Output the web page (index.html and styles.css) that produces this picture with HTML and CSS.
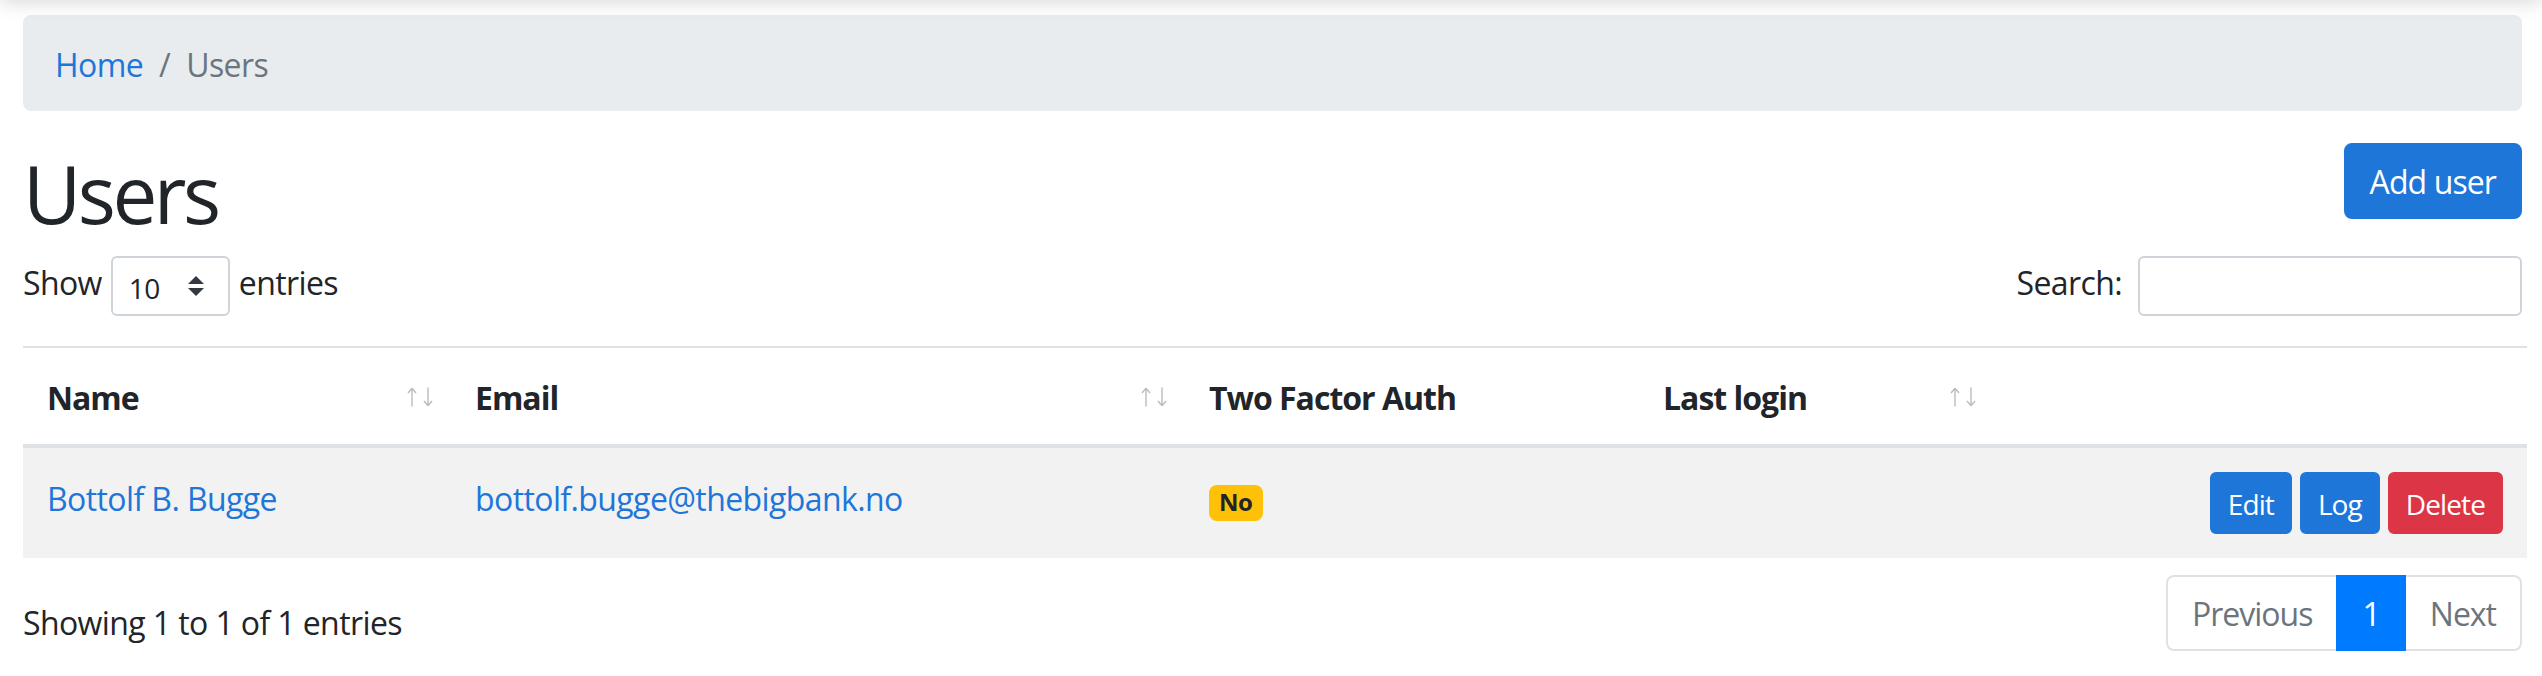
FILE: index.html
```html
<!DOCTYPE html>
<html lang="en">
<head>
<meta charset="utf-8">
<title>Users</title>
<link rel="stylesheet" href="styles.css">
</head>
<body>
<div class="topbar-shadow"></div>
<main class="page">
  <nav class="crumbs">
    <a href="#" class="crumb-link">Home</a>
    <span class="crumb-sep">/</span>
    <span class="crumb-current">Users</span>
  </nav>

  <div class="titlebar">
    <h1 class="title">Users</h1>
    <button class="btn btn-blue btn-lg" type="button">Add user</button>
  </div>

  <div class="dt-top">
    <label class="dt-length">
      <span class="dt-text">Show</span>
      <span class="dt-select">
        <span class="dt-select-val">10</span>
        <svg class="dt-select-arrow" width="16" height="20" viewBox="0 0 4 5"><path fill="#343a40" d="M2 0L0 2h4zm0 5L0 3h4z"/></svg>
      </span>
      <span class="dt-text">entries</span>
    </label>
    <label class="dt-filter">
      <span class="dt-text">Search:</span>
      <span class="dt-input"></span>
    </label>
  </div>

  <table class="users">
    <colgroup>
      <col class="c-name">
      <col class="c-email">
      <col class="c-tfa">
      <col class="c-login">
      <col class="c-actions">
    </colgroup>
    <thead>
      <tr>
        <th class="sortable">Name
          <span class="sort-icons">
            <svg class="arr" width="10" height="20" viewBox="0 0 10 20"><path d="M5 19.5V1.5M5 1.2L1 6M5 1.2L9 6" fill="none" stroke="#212529" stroke-width="1.4"/></svg>
            <svg class="arr" width="10" height="20" viewBox="0 0 10 20"><path d="M5 0.5V18.5M5 18.8L1 14M5 18.8L9 14" fill="none" stroke="#212529" stroke-width="1.4"/></svg>
          </span>
        </th>
        <th class="sortable">Email
          <span class="sort-icons">
            <svg class="arr" width="10" height="20" viewBox="0 0 10 20"><path d="M5 19.5V1.5M5 1.2L1 6M5 1.2L9 6" fill="none" stroke="#212529" stroke-width="1.4"/></svg>
            <svg class="arr" width="10" height="20" viewBox="0 0 10 20"><path d="M5 0.5V18.5M5 18.8L1 14M5 18.8L9 14" fill="none" stroke="#212529" stroke-width="1.4"/></svg>
          </span>
        </th>
        <th>Two Factor Auth</th>
        <th class="sortable">Last login
          <span class="sort-icons">
            <svg class="arr" width="10" height="20" viewBox="0 0 10 20"><path d="M5 19.5V1.5M5 1.2L1 6M5 1.2L9 6" fill="none" stroke="#212529" stroke-width="1.4"/></svg>
            <svg class="arr" width="10" height="20" viewBox="0 0 10 20"><path d="M5 0.5V18.5M5 18.8L1 14M5 18.8L9 14" fill="none" stroke="#212529" stroke-width="1.4"/></svg>
          </span>
        </th>
        <th></th>
      </tr>
    </thead>
    <tbody>
      <tr class="odd">
        <td class="text-cell"><a href="#" class="cell-link">Bottolf B. Bugge</a></td>
        <td class="text-cell"><a href="#" class="cell-link">bottolf.bugge@thebigbank.no</a></td>
        <td class="text-cell"><span class="badge badge-warning">No</span></td>
        <td class="text-cell"></td>
        <td>
          <div class="actions">
            <button class="btn btn-blue btn-sm" type="button">Edit</button>
            <button class="btn btn-blue btn-sm" type="button">Log</button>
            <button class="btn btn-red btn-sm" type="button">Delete</button>
          </div>
        </td>
      </tr>
    </tbody>
  </table>

  <div class="dt-bottom">
    <div class="dt-info">Showing 1 to 1 of 1 entries</div>
    <ul class="pager">
      <li class="pg-item disabled first"><span class="pg-link">Previous</span></li>
      <li class="pg-item active"><span class="pg-link">1</span></li>
      <li class="pg-item disabled last"><span class="pg-link">Next</span></li>
    </ul>
  </div>
</main>
</body>
</html>
```

FILE: styles.css
```css
* { box-sizing: border-box; }

html, body {
  margin: 0;
  padding: 0;
  background: #fff;
}

body {
  font-family: "Open Sans", "Noto Sans", "Liberation Sans", sans-serif;
  font-size: 32px;
  line-height: 48px;
  letter-spacing: -0.6px;
  color: #212529;
  overflow: hidden;
}

.topbar-shadow {
  position: fixed;
  left: 0;
  top: -60px;
  width: 100%;
  height: 60px;
  box-shadow: 0 2px 18px rgba(0, 0, 0, 0.16);
}

.page {
  padding: 15px 20px 0 23px;
}

/* breadcrumb */
.crumbs {
  display: flex;
  align-items: flex-start;
  background: #e9ecef;
  border-radius: 8px;
  padding: 26px 32px 22px;
  height: 96px;
  margin-bottom: 32px;
}

.crumb-link {
  color: #1e76d9;
  text-decoration: none;
}

.crumb-sep {
  color: #6c757d;
  padding: 0 16px;
}

.crumb-current {
  color: #6c757d;
}

/* title */
.titlebar {
  display: flex;
  justify-content: space-between;
  align-items: flex-start;
}

.title {
  margin: 0 0 14px;
  padding-top: 2px;
  font-size: 80px;
  line-height: 96px;
  font-weight: 400;
  letter-spacing: -3.5px;
  color: #212529;
}

/* buttons */
.btn {
  font-family: inherit;
  color: #fff;
  border: 2px solid transparent;
  cursor: pointer;
  display: inline-block;
  letter-spacing: -0.9px;
}

.btn-lg {
  font-size: 32px;
  line-height: 48px;
  padding: 13px 24px 11px;
  border-radius: 8px;
  height: 76px;
}

.btn-sm {
  font-size: 28px;
  line-height: 42px;
  padding: 9px 16px 7px;
  border-radius: 6px;
  height: 62px;
}

.btn-blue {
  background: #1e76d9;
  border-color: #1e76d9;
}

.btn-red {
  background: #dc3545;
  border-color: #dc3545;
}

/* datatable top controls */
.dt-top {
  display: flex;
  justify-content: space-between;
  align-items: flex-start;
  height: 79px;
}

.dt-length,
.dt-filter {
  display: flex;
  align-items: flex-start;
  padding-top: 1px;
}

.dt-text {
  line-height: 48px;
  padding-top: 3px;
}

.dt-length {
  gap: 9px;
}

.dt-select {
  display: flex;
  align-items: center;
  justify-content: space-between;
  width: 119px;
  height: 60px;
  border: 2px solid #ced4da;
  border-radius: 6px;
  padding: 0 24px 0 16px;
  font-size: 28px;
  line-height: 56px;
}

.dt-select-val {
  padding-top: 3px;
}

.dt-filter {
  gap: 16px;
}

.dt-input {
  display: block;
  width: 384px;
  height: 60px;
  border: 2px solid #ced4da;
  border-radius: 6px;
  background: #fff;
}

/* table */
.users {
  width: calc(100% + 5px);
  border-collapse: collapse;
  table-layout: fixed;
  margin: 12px 0 12px;
}

.c-name { width: 428px; }
.c-email { width: 734px; }
.c-tfa { width: 454px; }
.c-login { width: 355px; }
.c-actions { width: auto; }

.users th {
  position: relative;
  text-align: left;
  font-weight: 700;
  letter-spacing: -1px;
  padding: 26px 24px 22px;
  line-height: 48px;
  border-top: 2px solid #dee2e6;
  border-bottom: 4px solid #dee2e6;
  vertical-align: bottom;
}

.users th.sortable {
  padding-right: 60px;
}

.sort-icons {
  position: absolute;
  right: 18px;
  bottom: 37px;
  display: flex;
  gap: 6px;
  opacity: 0.3;
}

.arr {
  display: block;
}

.users td {
  padding: 24px;
  line-height: 48px;
  vertical-align: top;
  background: #f2f2f2;
  white-space: nowrap;
}

.users td.text-cell {
  padding-top: 27px;
  padding-bottom: 21px;
}

.cell-link {
  color: #1e76d9;
  text-decoration: none;
}

.badge {
  display: inline-block;
  font-size: 24px;
  font-weight: 700;
  line-height: 1;
  letter-spacing: -0.4px;
  padding: 5px 10px 7px;
  border-radius: 8px;
}

.badge-warning {
  background: #ffc107;
  color: #212529;
}

.actions {
  display: flex;
  justify-content: flex-end;
  gap: 8px;
}

/* bottom */
.dt-bottom {
  display: flex;
  justify-content: space-between;
  align-items: flex-start;
}

.dt-info {
  padding-top: 29px;
  line-height: 48px;
}

.pager {
  display: flex;
  list-style: none;
  margin: 5px 0 0;
  padding: 0;
  letter-spacing: -1px;
}

.pg-link {
  display: block;
  padding: 17px 24px 15px;
  line-height: 40px;
  border: 2px solid #dee2e6;
  background: #fff;
  color: #6c757d;
}

.pg-item + .pg-item .pg-link {
  margin-left: -2px;
}

.pg-item.first .pg-link {
  border-radius: 8px 0 0 8px;
}

.pg-item.last .pg-link {
  border-radius: 0 8px 8px 0;
}

.pg-item.active .pg-link {
  position: relative;
  z-index: 1;
  background: #007bff;
  border-color: #007bff;
  color: #fff;
}
```
